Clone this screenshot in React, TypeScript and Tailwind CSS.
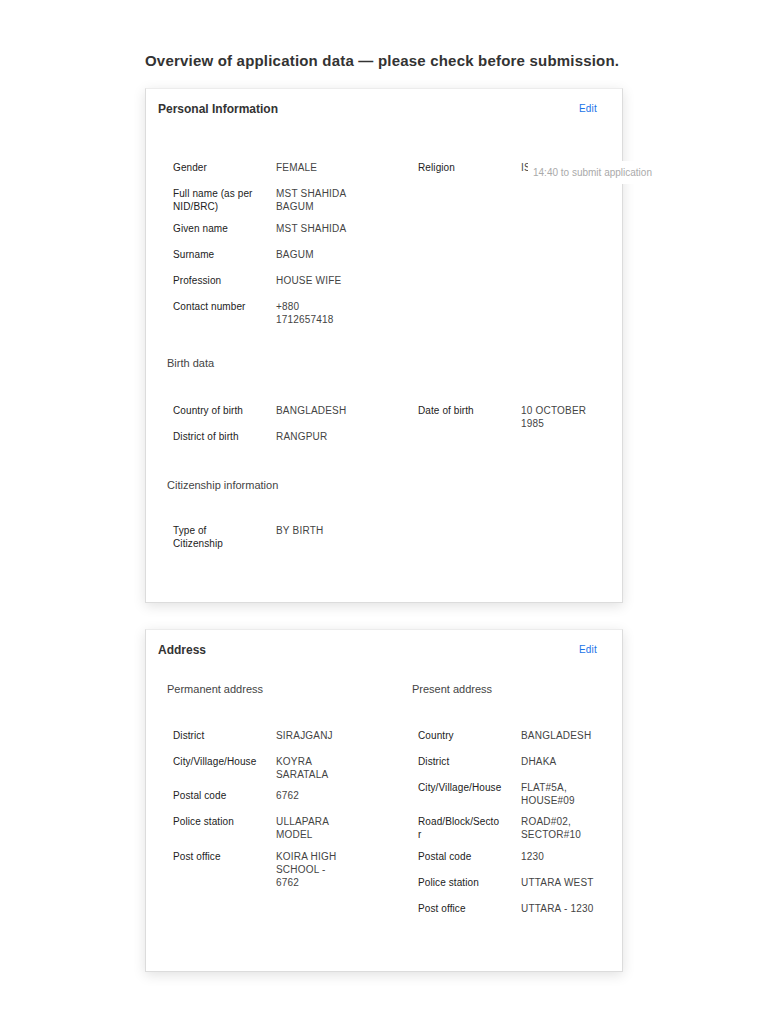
import type { ReactNode } from "react";

type Row = [ReactNode, string];

const PERSONAL: Row[] = [
  ["Gender", "FEMALE"],
  ["Full name (as per NID/BRC)", "MST SHAHIDA BAGUM"],
  ["Given name", "MST SHAHIDA"],
  ["Surname", "BAGUM"],
  ["Profession", "HOUSE WIFE"],
  ["Contact number", "+880 1712657418"],
];

const BIRTH_LEFT: Row[] = [
  ["Country of birth", "BANGLADESH"],
  ["District of birth", "RANGPUR"],
];

const PERMANENT: Row[] = [
  ["District", "SIRAJGANJ"],
  ["City/Village/House", "KOYRA SARATALA"],
  ["Postal code", "6762"],
  ["Police station", "ULLAPARA MODEL"],
  ["Post office", "KOIRA HIGH SCHOOL - 6762"],
];

const PRESENT: Row[] = [
  ["Country", "BANGLADESH"],
  ["District", "DHAKA"],
  ["City/Village/House", "FLAT#5A, HOUSE#09"],
  [
    <>
      Road/Block/Secto
      <br />r
    </>,
    "ROAD#02, SECTOR#10",
  ],
  ["Postal code", "1230"],
  ["Police station", "UTTARA WEST"],
  ["Post office", "UTTARA - 1230"],
];

function Field({ label, value }: { label: ReactNode; value: string }) {
  return (
    <div className="flex min-h-[26px] items-start pb-[8.5px] pl-[6px] text-[10px] leading-[13px]">
      <div className="w-[103px] shrink-0 pr-[18px] tracking-[0.1px] text-[#222]">
        {label}
      </div>
      <div className="w-[75px] tracking-[0.2px] text-[#444]">{value}</div>
    </div>
  );
}

function Fields({ rows }: { rows: Row[] }) {
  return (
    <div className="flex flex-col">
      {rows.map(([l, v]) => (
        <Field key={v} label={l} value={v} />
      ))}
    </div>
  );
}

function SubHeading({ children }: { children: ReactNode }) {
  return (
    <div className="text-[11px] leading-[14px] text-[#444]">{children}</div>
  );
}

function Card({
  title,
  className,
  children,
}: {
  title: string;
  className?: string;
  children: ReactNode;
}) {
  return (
    <section
      className={`relative border border-[#dcdcdc] border-t-[#ececec] bg-white px-[12px] pt-[12px] shadow-[0_3px_12px_rgba(0,0,0,0.12)] ${className ?? ""}`}
    >
      <div className="flex items-center justify-between pr-[13px]">
        <h2 className="text-[12px] font-bold leading-[16px] text-[#333]">
          {title}
        </h2>
        <button className="text-[10px] leading-[16px] tracking-[0.2px] text-[#1a73e8]">
          Edit
        </button>
      </div>
      <div className="pl-[9px]">{children}</div>
    </section>
  );
}

export default function App() {
  return (
    <div className="min-h-[1024px] w-full bg-white font-['Liberation_Sans',Arial,sans-serif]">
      <div className="mx-auto w-[478px] pt-[51px]">
        <h1 className="text-[15px] font-bold leading-[20px] tracking-[0.2px] text-[#333]">
          Overview of application data — please check before submission.
        </h1>

        <Card title="Personal Information" className="mt-[17px] pb-[43px]">
          <div className="mt-[44px] grid grid-cols-[245px_1fr]">
            <Fields rows={PERSONAL} />
            <Fields rows={[["Religion", "ISLAM"]]} />
          </div>

          <div className="mt-[22px]">
            <SubHeading>Birth data</SubHeading>
            <div className="mt-[34px] grid grid-cols-[245px_1fr]">
              <Fields rows={BIRTH_LEFT} />
              <Fields rows={[["Date of birth", "10 OCTOBER 1985"]]} />
            </div>
          </div>

          <div className="mt-[22px]">
            <SubHeading>Citizenship information</SubHeading>
            <div className="mt-[32px] grid grid-cols-[245px_1fr]">
              <Fields rows={[["Type of Citizenship", "BY BIRTH"]]} />
            </div>
          </div>

          {/* countdown toast laid over the card's edge */}
          <div className="absolute left-[382px] top-[72px] flex h-[23px] w-[135px] items-center bg-white pl-[5px] text-[10px] text-[#aaa]">
            14:40 to submit application
          </div>
        </Card>

        <Card title="Address" className="mt-[26px] pb-[43px]">
          <div className="mt-[24px] grid grid-cols-[245px_1fr]">
            <div>
              <SubHeading>Permanent address</SubHeading>
              <div className="mt-[33px]">
                <Fields rows={PERMANENT} />
              </div>
            </div>
            <div>
              <SubHeading>Present address</SubHeading>
              <div className="mt-[33px]">
                <Fields rows={PRESENT} />
              </div>
            </div>
          </div>
        </Card>
      </div>
    </div>
  );
}
